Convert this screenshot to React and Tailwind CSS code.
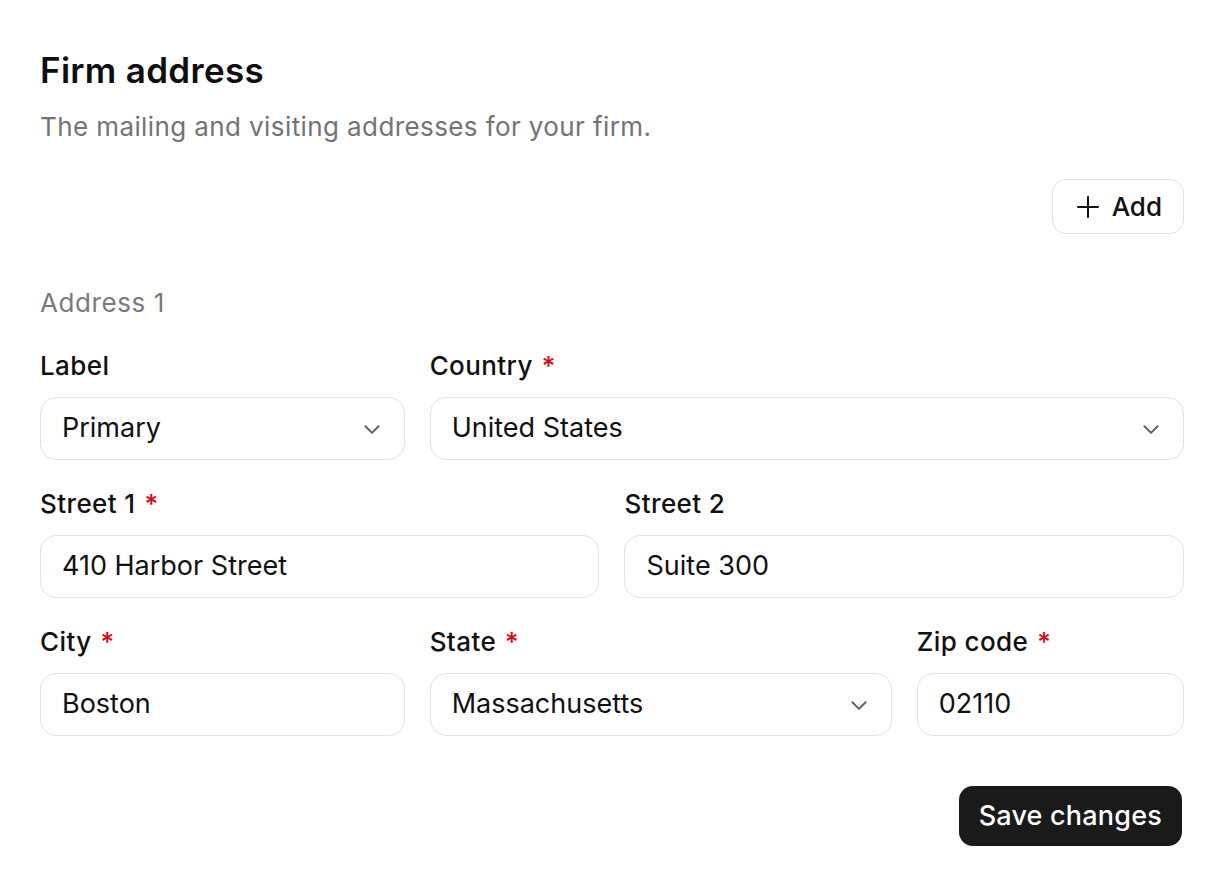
import React from 'react'

function Chevron() {
  return (
    <svg width="22" height="22" viewBox="0 0 20 20" fill="none" className="shrink-0">
      <path d="M4 7.5L10 13.5l6-6" stroke="#5f5f5f" strokeWidth="1.7" strokeLinecap="round" strokeLinejoin="round" />
    </svg>
  )
}

function Field({ label, required, value, select, span }) {
  return (
    <div className={span + ' flex flex-col gap-[16px]'}>
      <div className="h-[32px] flex items-center text-[26px] font-medium tracking-[0.4px] text-[#111]">
        {label}
        {required && <span className="ml-[9px] text-[#e5000f]">*</span>}
      </div>
      <div className="h-[63px] flex items-center justify-between rounded-[16px] border-[1.5px] border-[#e3e3e3] bg-white pl-[21px] pr-[21px] text-[27px] text-[#111]">
        <span>{value}</span>
        {select && <Chevron />}
      </div>
    </div>
  )
}

export default function App() {
  return (
    <div className="min-h-[890px] bg-white px-[40px] pt-[48px]" style={{ fontFamily: 'Inter, "Liberation Sans", sans-serif' }}>
      <h1 className="text-[35px] leading-[44px] font-semibold text-[#0f0f0f] tracking-[0.3px]">Firm address</h1>
      <p className="mt-[19px] text-[26px] leading-[32px] tracking-[0.4px] text-[#737373]">The mailing and visiting addresses for your firm.</p>

      <div className="mt-[36px] flex justify-end">
        <button className="h-[55px] flex items-center gap-[12px] rounded-[14px] border-[1.5px] border-[#e3e3e3] bg-white pl-[23px] pr-[21px] text-[26px] font-medium text-[#111]">
          <svg width="24" height="24" viewBox="0 0 24 24" fill="none">
            <path d="M12 2v20M2 12h20" stroke="#111" strokeWidth="2" strokeLinecap="round" />
          </svg>
          Add
        </button>
      </div>

      <div className="mt-[52px] h-[32px] flex items-center text-[26px] tracking-[0.6px] text-[#7a7a7a]">Address 1</div>

      <div className="mt-[31px] grid grid-cols-12 gap-x-[25px] gap-y-[27px]">
        <Field span="col-span-4" label="Label" value="Primary" select />
        <Field span="col-span-8" label="Country" required value="United States" select />
        <Field span="col-span-6" label="Street 1" required value="410 Harbor Street" />
        <Field span="col-span-6" label="Street 2" value="Suite 300" />
        <Field span="col-span-4" label="City" required value="Boston" />
        <Field span="col-span-5" label="State" required value="Massachusetts" select />
        <Field span="col-span-3" label="Zip code" required value="02110" />
      </div>

      <div className="mt-[50px] flex justify-end">
        <button className="mr-[2px] h-[60px] rounded-[14px] bg-[#1a1a1a] px-[20px] text-[27px] font-medium tracking-[0.2px] text-white">
          Save changes
        </button>
      </div>
    </div>
  )
}
